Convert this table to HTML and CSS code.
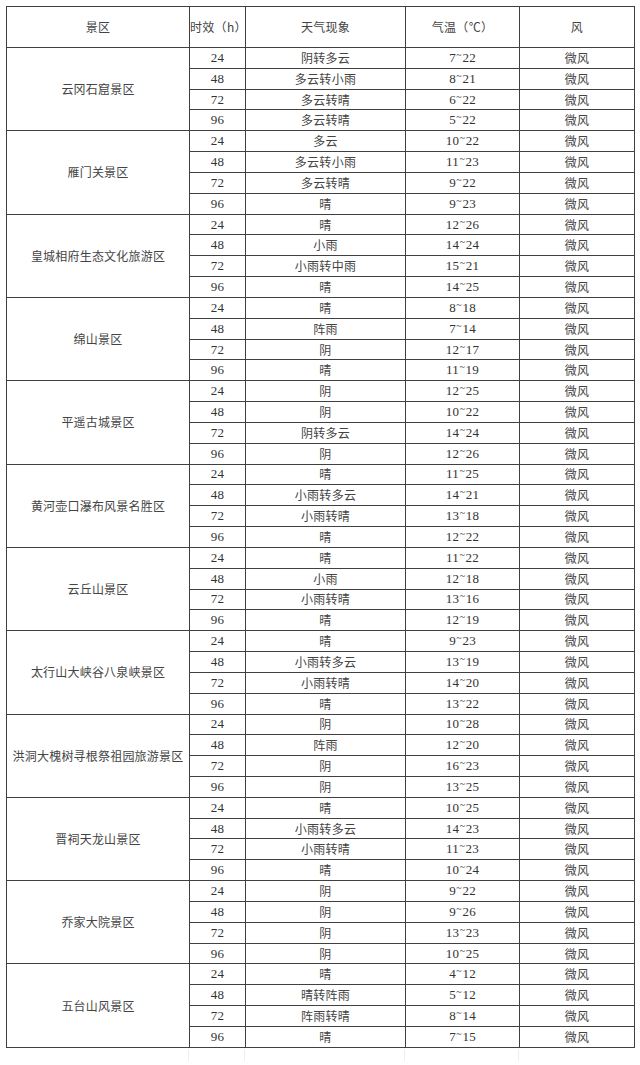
FILE: index.html
```html
<!DOCTYPE html>
<html lang="zh">
<head>
<meta charset="utf-8">
<title>景区天气预报</title>
<link rel="stylesheet" href="styles.css">
</head>
<body>
<table class="fc">
<colgroup><col class="c1"><col class="c2"><col class="c3"><col class="c4"><col class="c5"></colgroup>
<thead>
<tr class="hd"><th>景区</th><th>时效（h）</th><th>天气现象</th><th>气温（℃）</th><th>风</th></tr>
</thead>
<tbody>
<tr><td rowspan="4" class="site">云冈石窟景区</td><td class="n">24</td><td>阴转多云</td><td class="n">7<span class="t">~</span>22</td><td>微风</td></tr>
<tr><td class="n">48</td><td>多云转小雨</td><td class="n">8<span class="t">~</span>21</td><td>微风</td></tr>
<tr><td class="n">72</td><td>多云转晴</td><td class="n">6<span class="t">~</span>22</td><td>微风</td></tr>
<tr><td class="n">96</td><td>多云转晴</td><td class="n">5<span class="t">~</span>22</td><td>微风</td></tr>

<tr><td rowspan="4" class="site">雁门关景区</td><td class="n">24</td><td>多云</td><td class="n">10<span class="t">~</span>22</td><td>微风</td></tr>
<tr><td class="n">48</td><td>多云转小雨</td><td class="n">11<span class="t">~</span>23</td><td>微风</td></tr>
<tr><td class="n">72</td><td>多云转晴</td><td class="n">9<span class="t">~</span>22</td><td>微风</td></tr>
<tr><td class="n">96</td><td>晴</td><td class="n">9<span class="t">~</span>23</td><td>微风</td></tr>

<tr><td rowspan="4" class="site">皇城相府生态文化旅游区</td><td class="n">24</td><td>晴</td><td class="n">12<span class="t">~</span>26</td><td>微风</td></tr>
<tr><td class="n">48</td><td>小雨</td><td class="n">14<span class="t">~</span>24</td><td>微风</td></tr>
<tr><td class="n">72</td><td>小雨转中雨</td><td class="n">15<span class="t">~</span>21</td><td>微风</td></tr>
<tr><td class="n">96</td><td>晴</td><td class="n">14<span class="t">~</span>25</td><td>微风</td></tr>

<tr><td rowspan="4" class="site">绵山景区</td><td class="n">24</td><td>晴</td><td class="n">8<span class="t">~</span>18</td><td>微风</td></tr>
<tr><td class="n">48</td><td>阵雨</td><td class="n">7<span class="t">~</span>14</td><td>微风</td></tr>
<tr><td class="n">72</td><td>阴</td><td class="n">12<span class="t">~</span>17</td><td>微风</td></tr>
<tr><td class="n">96</td><td>晴</td><td class="n">11<span class="t">~</span>19</td><td>微风</td></tr>

<tr><td rowspan="4" class="site">平遥古城景区</td><td class="n">24</td><td>阴</td><td class="n">12<span class="t">~</span>25</td><td>微风</td></tr>
<tr><td class="n">48</td><td>阴</td><td class="n">10<span class="t">~</span>22</td><td>微风</td></tr>
<tr><td class="n">72</td><td>阴转多云</td><td class="n">14<span class="t">~</span>24</td><td>微风</td></tr>
<tr><td class="n">96</td><td>阴</td><td class="n">12<span class="t">~</span>26</td><td>微风</td></tr>

<tr><td rowspan="4" class="site">黄河壶口瀑布风景名胜区</td><td class="n">24</td><td>晴</td><td class="n">11<span class="t">~</span>25</td><td>微风</td></tr>
<tr><td class="n">48</td><td>小雨转多云</td><td class="n">14<span class="t">~</span>21</td><td>微风</td></tr>
<tr><td class="n">72</td><td>小雨转晴</td><td class="n">13<span class="t">~</span>18</td><td>微风</td></tr>
<tr><td class="n">96</td><td>晴</td><td class="n">12<span class="t">~</span>22</td><td>微风</td></tr>

<tr><td rowspan="4" class="site">云丘山景区</td><td class="n">24</td><td>晴</td><td class="n">11<span class="t">~</span>22</td><td>微风</td></tr>
<tr><td class="n">48</td><td>小雨</td><td class="n">12<span class="t">~</span>18</td><td>微风</td></tr>
<tr><td class="n">72</td><td>小雨转晴</td><td class="n">13<span class="t">~</span>16</td><td>微风</td></tr>
<tr><td class="n">96</td><td>晴</td><td class="n">12<span class="t">~</span>19</td><td>微风</td></tr>

<tr><td rowspan="4" class="site">太行山大峡谷八泉峡景区</td><td class="n">24</td><td>晴</td><td class="n">9<span class="t">~</span>23</td><td>微风</td></tr>
<tr><td class="n">48</td><td>小雨转多云</td><td class="n">13<span class="t">~</span>19</td><td>微风</td></tr>
<tr><td class="n">72</td><td>小雨转晴</td><td class="n">14<span class="t">~</span>20</td><td>微风</td></tr>
<tr><td class="n">96</td><td>晴</td><td class="n">13<span class="t">~</span>22</td><td>微风</td></tr>

<tr><td rowspan="4" class="site">洪洞大槐树寻根祭祖园旅游景区</td><td class="n">24</td><td>阴</td><td class="n">10<span class="t">~</span>28</td><td>微风</td></tr>
<tr><td class="n">48</td><td>阵雨</td><td class="n">12<span class="t">~</span>20</td><td>微风</td></tr>
<tr><td class="n">72</td><td>阴</td><td class="n">16<span class="t">~</span>23</td><td>微风</td></tr>
<tr><td class="n">96</td><td>阴</td><td class="n">13<span class="t">~</span>25</td><td>微风</td></tr>

<tr><td rowspan="4" class="site">晋祠天龙山景区</td><td class="n">24</td><td>晴</td><td class="n">10<span class="t">~</span>25</td><td>微风</td></tr>
<tr><td class="n">48</td><td>小雨转多云</td><td class="n">14<span class="t">~</span>23</td><td>微风</td></tr>
<tr><td class="n">72</td><td>小雨转晴</td><td class="n">11<span class="t">~</span>23</td><td>微风</td></tr>
<tr><td class="n">96</td><td>晴</td><td class="n">10<span class="t">~</span>24</td><td>微风</td></tr>

<tr><td rowspan="4" class="site">乔家大院景区</td><td class="n">24</td><td>阴</td><td class="n">9<span class="t">~</span>22</td><td>微风</td></tr>
<tr><td class="n">48</td><td>阴</td><td class="n">9<span class="t">~</span>26</td><td>微风</td></tr>
<tr><td class="n">72</td><td>阴</td><td class="n">13<span class="t">~</span>23</td><td>微风</td></tr>
<tr><td class="n">96</td><td>阴</td><td class="n">10<span class="t">~</span>25</td><td>微风</td></tr>

<tr><td rowspan="4" class="site">五台山风景区</td><td class="n">24</td><td>晴</td><td class="n">4<span class="t">~</span>12</td><td>微风</td></tr>
<tr><td class="n">48</td><td>晴转阵雨</td><td class="n">5<span class="t">~</span>12</td><td>微风</td></tr>
<tr><td class="n">72</td><td>阵雨转晴</td><td class="n">8<span class="t">~</span>14</td><td>微风</td></tr>
<tr><td class="n">96</td><td>晴</td><td class="n">7<span class="t">~</span>15</td><td>微风</td></tr>
</tbody>
</table>
<div class="ghost"><span></span><span></span><span></span><span></span><span></span></div>
</body>
</html>
```

FILE: styles.css
```css
html, body {
  margin: 0;
  padding: 0;
  background: #fff;
}
body {
  padding: 6px 6px 0 6px;
  font-family: "Liberation Serif", "Noto Sans CJK SC", serif;
  color: #3a3a3a;
}
.fc {
  border-collapse: collapse;
  table-layout: fixed;
  width: 628px;
  font-size: 12px;
}
.c1 { width: 183px; }
.c2 { width: 56px; }
.c3 { width: 160px; }
.c4 { width: 114px; }
.c5 { width: 115px; }
.fc th, .fc td {
  border: 1px solid #404040;
  padding: 0;
  text-align: center;
  vertical-align: middle;
  font-weight: normal;
  white-space: nowrap;
  line-height: 14px;
}
.fc th {
  font-family: "Noto Sans CJK SC", serif;
  height: 40px;
  font-size: 12px;
  color: #444;
  letter-spacing: 0.3px;
}
.fc td {
  height: 19.83px;
  font-family: "Noto Sans CJK SC", serif;
  font-weight: normal;
  color: #444;
  letter-spacing: 0.3px;
}
.fc td.n {
  font-family: "Liberation Serif", serif;
  font-size: 13px;
  letter-spacing: 0.2px;
  color: #333;
}
.fc td.site {
  letter-spacing: 0.2px;
}
.t {
  display: inline-block;
  font-size: 10px;
  line-height: 10px;
  position: relative;
  top: -4px;
  margin: 0 0.5px;
}
.ghost {
  display: grid;
  grid-template-columns: 183px 56px 160px 114px 115px;
  width: 628px;
  height: 12px;
  margin-top: 1px;
}
.ghost span {
  border-right: 1px solid #eeeeee;
}
.ghost span:last-child {
  border-right: none;
}
```
